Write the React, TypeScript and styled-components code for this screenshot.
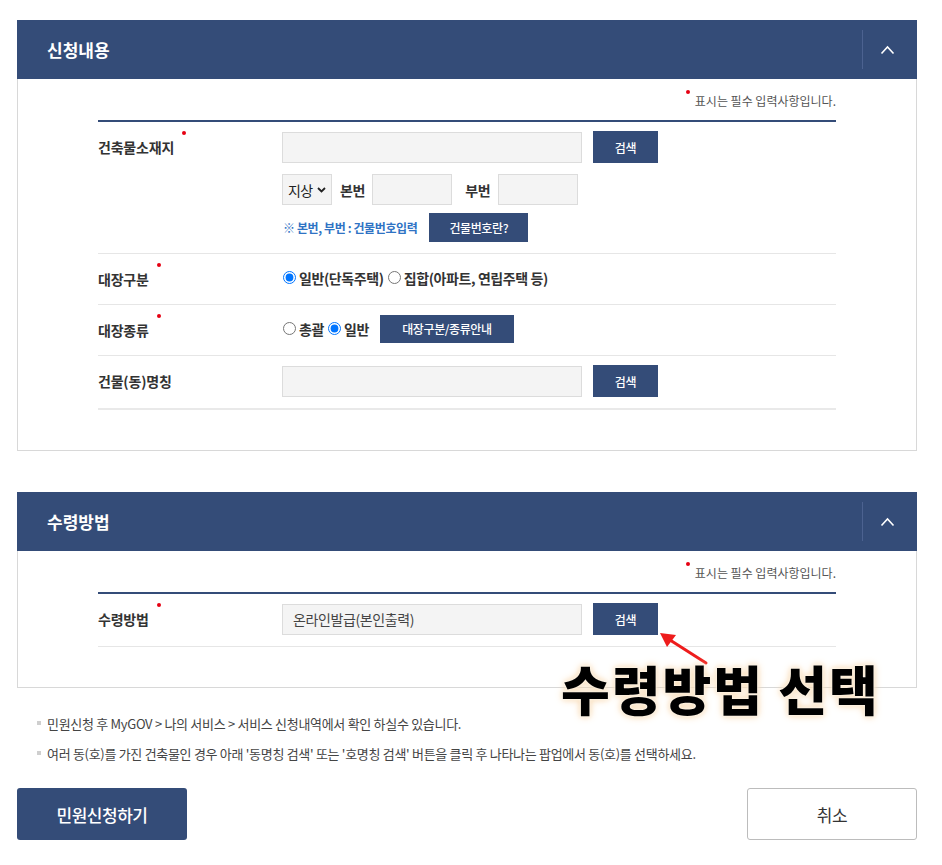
import styled, { createGlobalStyle } from 'styled-components';
import { FC, ReactNode } from 'react';

const navy = '#344c78';

const GlobalStyle = createGlobalStyle`
	body {
		margin: 0;
		background: #fff;
		font-family: 'Noto Sans CJK KR', 'Noto Sans', sans-serif;
		color: #333;
	}
`;

interface ISection {
	title: string;
	children: ReactNode;
}

const Section: FC<ISection> = ({ title, children }) => (
	<SectionBox>
		<SectionHeader>
			<SectionTitle>{title}</SectionTitle>
			<ToggleButton>
				<svg width='15' height='10' viewBox='0 0 15 10'>
					<path d='M1.5 8.5 L7.5 2 L13.5 8.5' fill='none' stroke='#fff' strokeWidth='1.6' />
				</svg>
			</ToggleButton>
		</SectionHeader>
		<SectionBody>
			<Legend>
				<Dot />
				표시는 필수 입력사항입니다.
			</Legend>
			<Table>{children}</Table>
		</SectionBody>
	</SectionBox>
);

interface IRow {
	label: string;
	required?: boolean;
	last?: boolean;
	children: ReactNode;
}

const Row: FC<IRow> = ({ label, required, last, children }) => (
	<RowBox $last={last}>
		<Label>
			{label}
			{required && <LabelDot />}
		</Label>
		<Field>{children}</Field>
	</RowBox>
);

const Radio: FC<{ name: string; label: string; checked?: boolean }> = ({ name, label, checked }) => (
	<RadioLabel>
		<RadioInput type='radio' name={name} defaultChecked={checked} />
		{label}
	</RadioLabel>
);

export default function App() {
	return (
		<Page>
			<GlobalStyle />
			<Section title='신청내용'>
				<Row label='건축물소재지' required>
					<Line>
						<TextInput $width={300} />
						<NavyButton $width={65}>검색</NavyButton>
					</Line>
					<Line $gap={0}>
						<Select>
							지상
							<svg width='9' height='6' viewBox='0 0 9 6'>
								<path d='M1 1 L4.5 4.5 L8 1' fill='none' stroke='#222' strokeWidth='1.8' />
							</svg>
						</Select>
						<InlineText $left={8} $right={7}>본번</InlineText>
						<TextInput $width={80} />
						<InlineText $left={13} $right={8}>부번</InlineText>
						<TextInput $width={80} />
					</Line>
					<Line $gap={12} $top={8}>
						<Note>※ 본번, 부번 : 건물번호입력</Note>
						<NavyButton $width={99} $height={29}>건물번호란?</NavyButton>
					</Line>
				</Row>
				<Row label='대장구분' required>
					<Line $gap={3} $height={29}>
						<Radio name='kind' label='일반(단독주택)' checked />
						<Radio name='kind' label='집합(아파트, 연립주택 등)' />
					</Line>
				</Row>
				<Row label='대장종류' required>
					<Line $gap={3} $height={29}>
						<Radio name='type' label='총괄' />
						<Radio name='type' label='일반' checked />
						<NavyButton $width={134} $height={28} $left={8}>대장구분/종류안내</NavyButton>
					</Line>
				</Row>
				<Row label='건물(동)명칭' last>
					<Line>
						<TextInput $width={300} />
						<NavyButton $width={65}>검색</NavyButton>
					</Line>
				</Row>
			</Section>

			<Spacer />

			<Section title='수령방법'>
				<Row label='수령방법' required>
					<Line>
						<TextInput $width={300} readOnly value='온라인발급(본인출력)' />
						<NavyButton $width={65}>검색</NavyButton>
					</Line>
				</Row>
			</Section>

			<Notes>
				<NoteItem>민원신청 후 MyGOV &gt; 나의 서비스 &gt; 서비스 신청내역에서 확인 하실수 있습니다.</NoteItem>
				<NoteItem>
					여러 동(호)를 가진 건축물인 경우 아래 '동명칭 검색' 또는 '호명칭 검색' 버튼을 클릭 후 나타나는 팝업에서 동(호)를 선택하세요.
				</NoteItem>
			</Notes>

			<Actions>
				<SubmitButton>민원신청하기</SubmitButton>
				<CancelButton>취소</CancelButton>
			</Actions>

			<Arrow width='60' height='40' viewBox='0 0 60 40'>
				<path d='M50 34 L14 11' stroke='#ee1c1c' strokeWidth='3' strokeLinecap='round' />
				<path d='M4 4 L20 6 L11 18 Z' fill='#ee1c1c' />
			</Arrow>
			<Callout>수령방법 선택</Callout>
		</Page>
	);
}

const Page = styled.div`
	position: relative;
	width: 900px;
	padding: 20px 0 25px 17px;
`;

const SectionBox = styled.section`
	width: 900px;
`;

const SectionHeader = styled.div`
	display: flex;
	align-items: center;
	justify-content: space-between;
	height: 59px;
	background: ${navy};
	padding-left: 30px;
	box-sizing: border-box;
`;

const SectionTitle = styled.h2`
	margin: 0;
	color: #fff;
	font-size: 17px;
	font-weight: 700;
	letter-spacing: 0;
`;

const ToggleButton = styled.div`
	display: flex;
	align-items: center;
	justify-content: center;
	width: 55px;
	height: 39px;
	padding-right: 5px;
	box-sizing: border-box;
	border-left: 1px solid #4c6290;
`;

const SectionBody = styled.div`
	border: 1px solid #d8d8d8;
	border-top: none;
	padding: 11px 80px 40px 80px;
`;

const Legend = styled.div`
	display: flex;
	justify-content: flex-end;
	align-items: center;
	height: 20px;
	font-size: 12px;
	color: #555;
	letter-spacing: 0;
`;

const Dot = styled.span`
	width: 4px;
	height: 4px;
	border-radius: 50%;
	background: #e60012;
	margin-right: 5px;
	align-self: flex-start;
`;

const Table = styled.div`
	margin-top: 10px;
	border-top: 2px solid ${navy};
`;

const RowBox = styled.div<{ $last?: boolean }>`
	display: flex;
	align-items: flex-start;
	padding: 9px 0 11px;
	border-bottom: ${(p) => (p.$last ? '2px solid #e9e9e9' : '1px solid #e6e6e6')};
`;

const Label = styled.div`
	width: 184px;
	height: 29px;
	margin-top: 1px;
	display: flex;
	align-items: center;
	font-size: 14px;
	font-weight: 700;
	color: #333;
	letter-spacing: -0.2px;
`;

const LabelDot = styled.span`
	width: 4px;
	height: 4px;
	border-radius: 50%;
	background: #e60012;
	margin-left: 8px;
	align-self: flex-start;
	margin-top: -1px;
`;

const Field = styled.div`
	display: flex;
	flex-direction: column;
	gap: 11px;
`;

const Line = styled.div<{ $gap?: number; $top?: number; $height?: number }>`
	display: flex;
	align-items: center;
	gap: ${(p) => p.$gap ?? 11}px;
	margin-top: ${(p) => (p.$top ? p.$top - 11 : 0)}px;
	${(p) => (p.$height ? `height: ${p.$height}px;` : '')}
`;

const TextInput = styled.input<{ $width: number }>`
	width: ${(p) => p.$width}px;
	height: 31px;
	box-sizing: border-box;
	border: 1px solid #dcdcdc;
	background: #f4f4f4;
	padding: 0 10px;
	font-family: inherit;
	font-size: 14px;
	color: #444;
	letter-spacing: -0.4px;
	outline: none;
`;

const Select = styled.div`
	display: flex;
	align-items: center;
	gap: 4px;
	width: 50px;
	height: 31px;
	box-sizing: border-box;
	border: 1px solid #dcdcdc;
	background: #f4f4f4;
	padding-left: 5px;
	font-size: 14px;
	color: #222;
	letter-spacing: -0.6px;
`;

const InlineText = styled.span<{ $left: number; $right: number }>`
	margin: 0 ${(p) => p.$right}px 0 ${(p) => p.$left}px;
	font-size: 14px;
	font-weight: 700;
	color: #333;
	letter-spacing: -0.3px;
`;

const NavyButton = styled.button<{ $width: number; $height?: number; $left?: number }>`
	width: ${(p) => p.$width}px;
	height: ${(p) => p.$height ?? 32}px;
	margin-left: ${(p) => p.$left ?? 0}px;
	border: none;
	background: ${navy};
	color: #fff;
	font-family: inherit;
	font-size: 12px;
	font-weight: 500;
	letter-spacing: -0.4px;
	padding: 0;
	cursor: pointer;
`;

const Note = styled.span`
	font-size: 12px;
	font-weight: 700;
	color: #2f73c4;
	letter-spacing: -0.4px;
	padding-left: 1px;
`;

const RadioLabel = styled.label`
	display: flex;
	align-items: center;
	gap: 2px;
	font-size: 14px;
	font-weight: 700;
	color: #333;
	letter-spacing: -0.4px;
`;

const RadioInput = styled.input`
	margin: 0 1px;
	width: 13px;
	height: 13px;
`;

const Spacer = styled.div`
	height: 41px;
`;

const Notes = styled.ul`
	list-style: none;
	margin: 20px 0 0;
	padding: 0 0 0 20px;
`;

const NoteItem = styled.li`
	display: flex;
	align-items: center;
	height: 30px;
	font-size: 13px;
	color: #444;
	letter-spacing: -0.3px;

	&::before {
		content: '';
		width: 4px;
		height: 4px;
		background: #cfcfcf;
		margin-right: 6px;
		flex: none;
	}
`;

const Actions = styled.div`
	display: flex;
	justify-content: space-between;
	margin-top: 20px;
`;

const SubmitButton = styled.button`
	width: 170px;
	height: 52px;
	border: none;
	border-radius: 3px;
	background: ${navy};
	color: #fff;
	font-family: inherit;
	font-size: 17px;
	font-weight: 500;
	letter-spacing: -0.5px;
`;

const CancelButton = styled.button`
	width: 170px;
	height: 52px;
	border: 1px solid #bcbcbc;
	border-radius: 3px;
	background: #fff;
	color: #333;
	font-family: inherit;
	font-size: 17px;
	letter-spacing: -0.5px;
`;

const Arrow = styled.svg`
	position: absolute;
	left: 656px;
	top: 629px;
`;

const Callout = styled.div`
	position: absolute;
	left: 561px;
	top: 659px;
	font-size: 53px;
	line-height: 1.1;
	font-weight: 900;
	color: #000;
	letter-spacing: 2px;
	text-shadow: 0 0 3px #fff, 0 0 5px #fbe3c0, 0 0 8px #f6d2a4;
	white-space: nowrap;
`;
